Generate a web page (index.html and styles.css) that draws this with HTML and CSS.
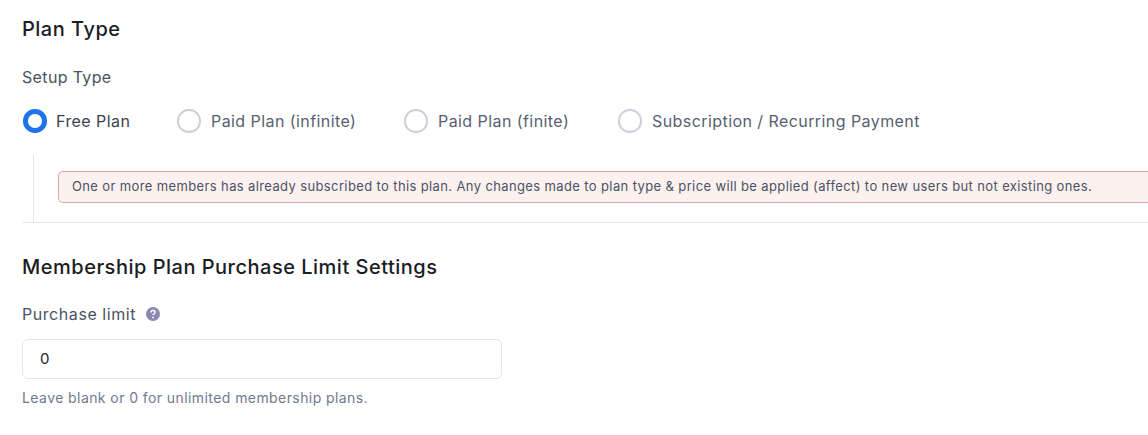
FILE: index.html
```html
<!DOCTYPE html>
<html lang="en">
<head>
<meta charset="utf-8">
<title>Plan Type</title>
<link rel="stylesheet" href="styles.css">
</head>
<body>
<main class="page">
  <h2 class="heading plan-heading">Plan Type</h2>
  <div class="label setup-label">Setup Type</div>
  <div class="radios">
    <label class="radio radio-free"><span class="dot dot-on"></span><span class="radio-text radio-text-on">Free Plan</span></label>
    <label class="radio radio-inf"><span class="dot"></span><span class="radio-text">Paid Plan (infinite)</span></label>
    <label class="radio radio-fin"><span class="dot"></span><span class="radio-text">Paid Plan (finite)</span></label>
    <label class="radio"><span class="dot"></span><span class="radio-text">Subscription / Recurring Payment</span></label>
  </div>
  <section class="panel">
    <div class="alert">One or more members has already subscribed to this plan. Any changes made to plan type &amp; price will be applied (affect) to new users but not existing ones.</div>
  </section>
  <h2 class="heading limit-heading">Membership Plan Purchase Limit Settings</h2>
  <div class="label limit-label">Purchase limit
    <svg class="help" width="14" height="14" viewBox="0 0 14 14" aria-hidden="true">
      <circle cx="7" cy="7" r="7" fill="#8a89b0"/>
      <path d="M5 5.4c0-1.2.9-1.9 2-1.9s2 .7 2 1.7c0 .8-.5 1.2-1.1 1.6-.6.4-.9.7-.9 1.3" fill="none" stroke="#fff" stroke-width="1.4"/>
      <circle cx="7" cy="10.4" r=".9" fill="#fff"/>
    </svg>
  </div>
  <div class="input">0</div>
  <p class="hint">Leave blank or 0 for unlimited membership plans.</p>
</main>
</body>
</html>
```
FILE: styles.css
```css
html, body {
  margin: 0;
  padding: 0;
  background: #fff;
  overflow: hidden;
}
body {
  width: 1148px;
  height: 435px;
  font-family: Inter, "Noto Sans", sans-serif;
}
.page {
  padding: 17px 0 0 22px;
}
.heading {
  margin: 0;
  font-size: 20px;
  line-height: 24px;
  font-weight: 500;
  letter-spacing: 0.5px;
  color: #1a1d24;
}
.label {
  font-size: 16px;
  line-height: 20px;
  letter-spacing: 0.35px;
  color: #4a5363;
  display: flex;
  align-items: center;
}
.setup-label {
  margin-top: 26px;
}
.radios {
  display: flex;
  align-items: center;
  margin-top: 22px;
  height: 24px;
}
.radio {
  display: flex;
  align-items: center;
  gap: 10.5px;
}
.radio-free {
  width: 154px;
  margin-left: 1px;
  gap: 9.5px;
}
.radio-inf { width: 227px; }
.radio-fin { width: 214px; }
.dot {
  box-sizing: border-box;
  width: 23.5px;
  height: 23.5px;
  border-radius: 50%;
  border: 2px solid #cdd0da;
  background: #fff;
}
.dot-on {
  border: 5px solid #1f74ec;
}
.radio-text {
  font-size: 16px;
  line-height: 24px;
  letter-spacing: 0.43px;
  color: #565f6f;
}
.radio-text-on {
  color: #3a4252;
}
.panel {
  position: relative;
  box-sizing: border-box;
  margin-top: 22px;
  height: 68px;
  width: 1126px;
  border-bottom: 1px solid #e4e5e9;
  padding: 16px 0 0 36px;
}
.panel::after {
  content: "";
  position: absolute;
  left: 11px;
  top: 0;
  bottom: 0;
  width: 1px;
  background: #e4e5e9;
}
.alert {
  box-sizing: border-box;
  height: 32px;
  width: 1120px;
  padding-left: 13px;
  border: 1px solid #e3aaa3;
  border-right: 0;
  border-radius: 5px 0 0 5px;
  background: #fdf1f0;
  font-size: 13px;
  line-height: 29px;
  letter-spacing: 0.375px;
  color: #4a5363;
  white-space: nowrap;
}
.limit-heading {
  margin-top: 32px;
}
.limit-label {
  margin-top: 25px;
  gap: 10px;
  letter-spacing: 0.56px;
}
.help {
  display: block;
}
.input {
  box-sizing: border-box;
  margin-top: 15px;
  width: 480px;
  height: 40px;
  border: 1px solid #e4e5e9;
  border-radius: 6px;
  padding-left: 17px;
  font-size: 15px;
  line-height: 38px;
  color: #1f232c;
}
.hint {
  margin: 9px 0 0;
  font-size: 14px;
  line-height: 20px;
  letter-spacing: 0.42px;
  color: #6f7a90;
}
```
